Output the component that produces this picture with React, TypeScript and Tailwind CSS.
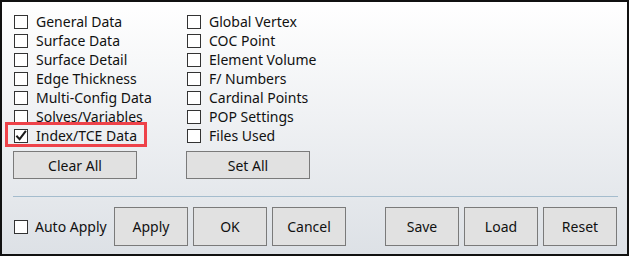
import React from "react";

const leftItems = [
  "General Data",
  "Surface Data",
  "Surface Detail",
  "Edge Thickness",
  "Multi-Config Data",
  "Solves/Variables",
  "Index/TCE Data",
];

const rightItems = [
  "Global Vertex",
  "COC Point",
  "Element Volume",
  "F/ Numbers",
  "Cardinal Points",
  "POP Settings",
  "Files Used",
];

function Box({ checked = false }: { checked?: boolean }) {
  return (
    <span className="flex h-[14px] w-[14px] shrink-0 items-center justify-center border border-[#333333] bg-white">
      {checked && (
        <svg width="13" height="13" viewBox="0 0 13 13">
          <path d="M1.5 6.8 L5 10.5 L11.8 1.6" fill="none" stroke="#1a1a1a" strokeWidth="2.2" />
        </svg>
      )}
    </span>
  );
}

function Row({ label, checked, highlight }: { label: string; checked?: boolean; highlight?: boolean }) {
  return (
    <div className="relative flex h-[19px] items-center gap-[8px] pl-[1px]">
      <Box checked={checked} />
      <span className="leading-none">{label}</span>
      {highlight && (
        <span className="pointer-events-none absolute left-[-8px] top-[-4px] h-[25px] w-[142px] border-[3px] border-[#ee4249]" />
      )}
    </div>
  );
}

function Btn({ label, w }: { label: string; w: string }) {
  return (
    <button className={`flex h-full items-center justify-center border border-[#7a7a7a] bg-[#e1e1e1] text-[#111] ${w}`}>
      {label}
    </button>
  );
}

export default function App() {
  return (
    <div className="h-[259px] w-[630px] bg-white text-[14px] text-[#111]" style={{ fontFamily: '"Noto Sans", "Liberation Sans", sans-serif' }}>
      <div className="flex h-[256px] w-[629px] flex-col border-2 border-[#111] bg-gradient-to-b from-white to-[#dde1e6] pl-[11px] pt-[10px]">
        <div className="flex">
          <div className="flex w-[173px] flex-col">
            {leftItems.map((t, i) => (
              <Row key={t} label={t} checked={i === 6} highlight={i === 6} />
            ))}
          </div>
          <div className="flex flex-col">
            {rightItems.map((t) => (
              <Row key={t} label={t} />
            ))}
          </div>
        </div>
        <div className="mt-[6px] flex h-[28px] gap-[49px]">
          <Btn label="Clear All" w="w-[124px]" />
          <Btn label="Set All" w="w-[124px]" />
        </div>
        <div className="mt-[17px] h-px w-[605px] bg-[#a4bccd]" />
        <div className="mt-[10px] flex h-[39px] items-center">
          <div className="flex w-[101px] items-center gap-[7px] pl-[1px]">
            <Box />
            <span>Auto Apply</span>
          </div>
          <div className="flex h-full gap-[5px]">
            <Btn label="Apply" w="w-[74px]" />
            <Btn label="OK" w="w-[74px]" />
            <Btn label="Cancel" w="w-[74px]" />
          </div>
          <div className="ml-[39px] flex h-full gap-[5px]">
            <Btn label="Save" w="w-[74px]" />
            <Btn label="Load" w="w-[74px]" />
            <Btn label="Reset" w="w-[74px]" />
          </div>
        </div>
      </div>
    </div>
  );
}
